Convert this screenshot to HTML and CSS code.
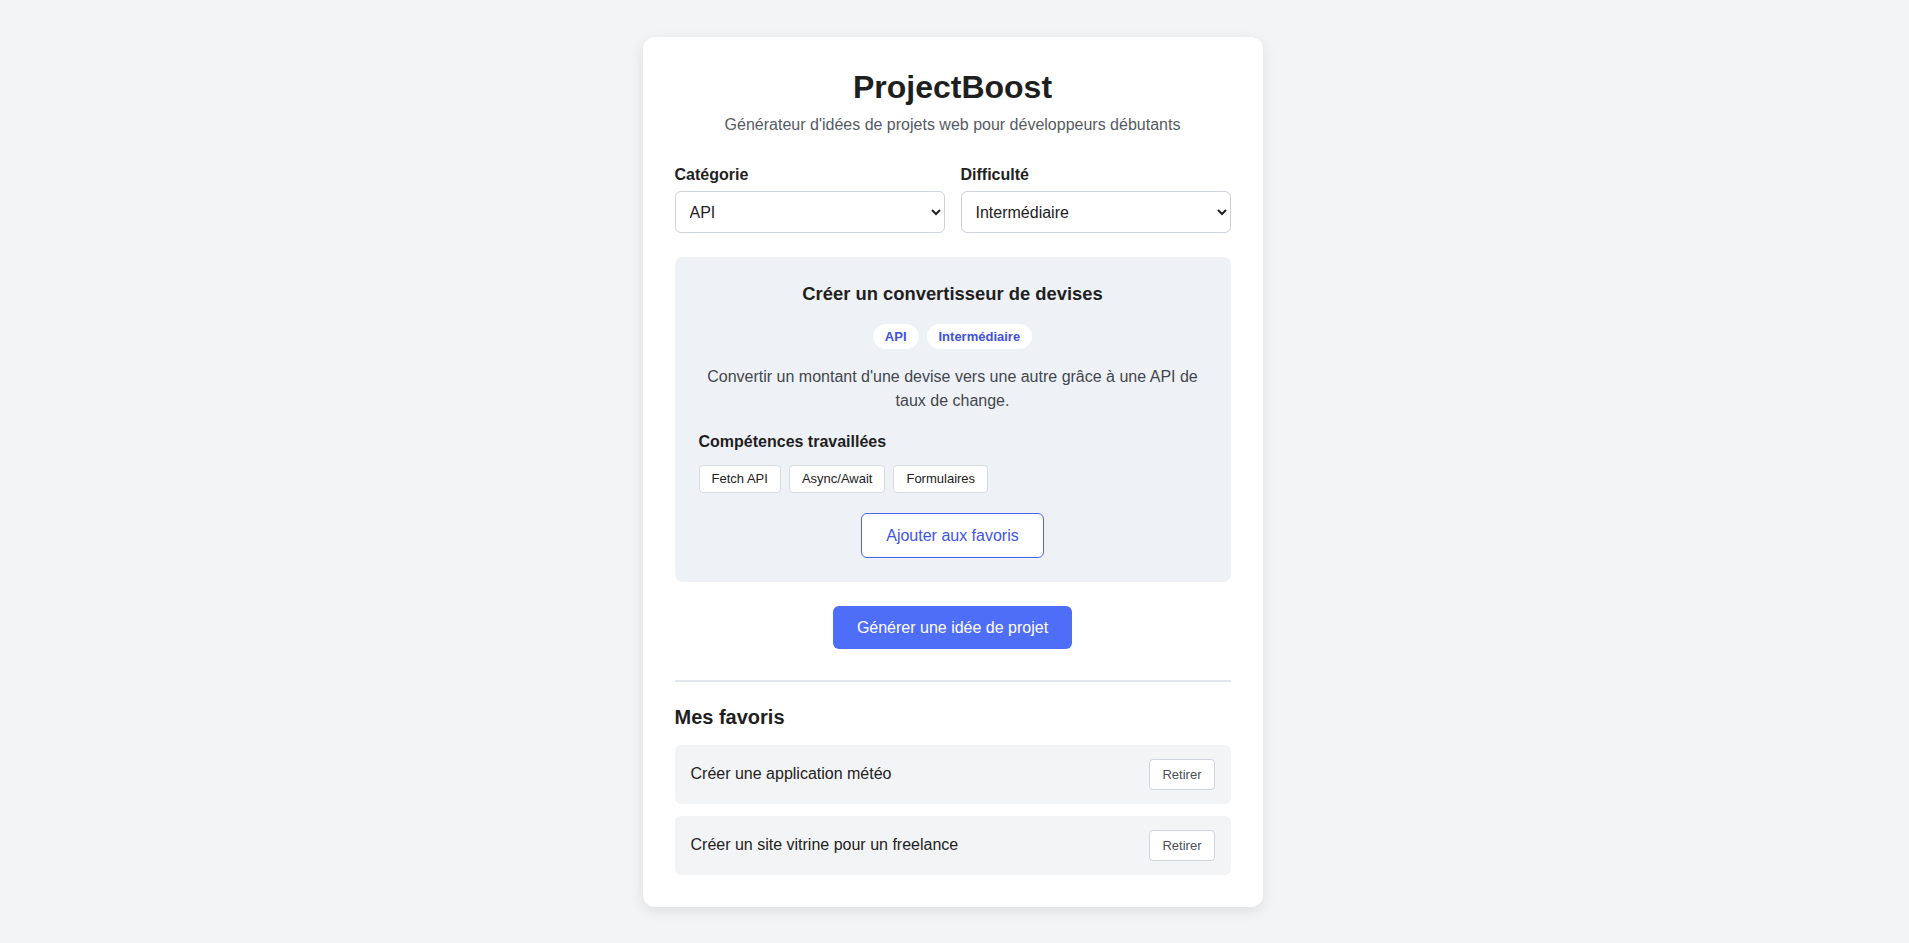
FILE: index.html
```html
<!DOCTYPE html>
<html lang="fr">
<head>
<meta charset="utf-8">
<title>ProjectBoost</title>
<link rel="stylesheet" href="styles.css">
</head>
<body>
<main class="card">
  <header class="header">
    <h1 class="title">ProjectBoost</h1>
    <p class="subtitle">Générateur d'idées de projets web pour développeurs débutants</p>
  </header>

  <div class="filters">
    <div class="field">
      <label class="label" for="cat">Catégorie</label>
      <select id="cat" class="select">
        <option>API</option>
      </select>
    </div>
    <div class="field">
      <label class="label" for="diff">Difficulté</label>
      <select id="diff" class="select">
        <option>Intermédiaire</option>
      </select>
    </div>
  </div>

  <section class="idea">
    <h2 class="idea-title">Créer un convertisseur de devises</h2>
    <div class="badges">
      <span class="badge">API</span>
      <span class="badge">Intermédiaire</span>
    </div>
    <p class="idea-desc">Convertir un montant d'une devise vers une autre grâce à une API de taux de change.</p>
    <h3 class="skills-title">Compétences travaillées</h3>
    <div class="skills">
      <span class="skill">Fetch API</span>
      <span class="skill">Async/Await</span>
      <span class="skill">Formulaires</span>
    </div>
    <div class="idea-actions">
      <button class="btn-outline">Ajouter aux favoris</button>
    </div>
  </section>

  <div class="generate-row">
    <button class="btn-primary">Générer une idée de projet</button>
  </div>

  <hr class="divider">

  <section class="favorites">
    <h2 class="fav-title">Mes favoris</h2>
    <ul class="fav-list">
      <li class="fav-item">
        <span class="fav-name">Créer une application météo</span>
        <button class="btn-remove">Retirer</button>
      </li>
      <li class="fav-item">
        <span class="fav-name">Créer un site vitrine pour un freelance</span>
        <button class="btn-remove">Retirer</button>
      </li>
    </ul>
  </section>
</main>
</body>
</html>
```

FILE: styles.css
```css
* {
  box-sizing: border-box;
}

body {
  margin: 0;
  padding-right: 4px;
  background: #f3f4f6;
  font-family: "Liberation Sans", Arial, sans-serif;
  color: #1f2328;
}

.card {
  width: 620px;
  margin: 37px auto 36px;
  padding: 32px;
  background: #ffffff;
  border-radius: 12px;
  box-shadow: 0 4px 14px rgba(0, 0, 0, 0.09);
}

.header {
  text-align: center;
  margin-bottom: 32px;
}

.title {
  margin: 0;
  font-size: 32px;
  font-weight: 700;
  color: #1f1f1f;
}

.subtitle {
  margin: 10px 0 0;
  font-size: 16px;
  color: #555b63;
}

.filters {
  display: grid;
  grid-template-columns: 1fr 1fr;
  gap: 16px;
}

.field {
  display: flex;
  flex-direction: column;
}

.label {
  font-size: 16px;
  font-weight: 700;
  color: #1f1f1f;
  margin-bottom: 7px;
}

.select {
  height: 42px;
  padding: 0 8px 0 10px;
  font-family: "Liberation Sans", Arial, sans-serif;
  font-size: 16px;
  color: #222;
  background: #ffffff;
  border: 1px solid #cdd3dc;
  border-radius: 6px;
}

.idea {
  margin-top: 24px;
  padding: 26px 24px 24px;
  background: #eef1f6;
  border-radius: 8px;
}

.idea-title {
  margin: 0;
  text-align: center;
  font-size: 18.4px;
  font-weight: 700;
  color: #1f1f1f;
}

.badges {
  display: flex;
  justify-content: center;
  gap: 8px;
  margin-top: 19px;
}

.badge {
  padding: 4px 12px;
  font-size: 13px;
  font-weight: 700;
  line-height: 17px;
  color: #3f51dd;
  background: #ffffff;
  border-radius: 999px;
}

.idea-desc {
  margin: 16px 0 0;
  text-align: center;
  font-size: 16px;
  line-height: 24.4px;
  color: #43474d;
}

.skills-title {
  margin: 19px 0 0;
  font-size: 16px;
  font-weight: 700;
  color: #1f1f1f;
}

.skills {
  display: flex;
  gap: 8px;
  margin-top: 14px;
}

.skill {
  padding: 5px 12px;
  font-size: 13px;
  line-height: 16px;
  color: #222;
  background: #ffffff;
  border: 1px solid #d6dbe3;
  border-radius: 4px;
}

.idea-actions {
  display: flex;
  justify-content: center;
  margin-top: 20px;
}

.btn-outline {
  padding: 12px 24px;
  font-family: "Liberation Sans", Arial, sans-serif;
  font-size: 16px;
  line-height: 19px;
  color: #3f55e6;
  background: #ffffff;
  border: 1px solid #4a62ee;
  border-radius: 6px;
}

.generate-row {
  display: flex;
  justify-content: center;
  margin-top: 24px;
}

.btn-primary {
  padding: 12px 24px;
  font-family: "Liberation Sans", Arial, sans-serif;
  font-size: 16px;
  line-height: 19px;
  color: #ffffff;
  background: #4f6ef7;
  border: none;
  border-radius: 6px;
}

.divider {
  margin: 31px 0 0;
  border: none;
  border-top: 2px solid #e3e7ed;
}

.favorites {
  margin-top: 24px;
}

.fav-title {
  margin: 0 0 16px;
  font-size: 20px;
  font-weight: 700;
  color: #1f1f1f;
}

.fav-list {
  list-style: none;
  margin: 0;
  padding: 0;
  display: flex;
  flex-direction: column;
  gap: 12px;
}

.fav-item {
  display: flex;
  align-items: center;
  justify-content: space-between;
  padding: 14px 16px;
  background: #f3f4f6;
  border-radius: 6px;
}

.fav-name {
  font-size: 16px;
  color: #222;
}

.btn-remove {
  padding: 6px 12px;
  font-family: "Liberation Sans", Arial, sans-serif;
  font-size: 13px;
  line-height: 17px;
  color: #4b5058;
  background: #ffffff;
  border: 1px solid #cfd5de;
  border-radius: 4px;
}
```
